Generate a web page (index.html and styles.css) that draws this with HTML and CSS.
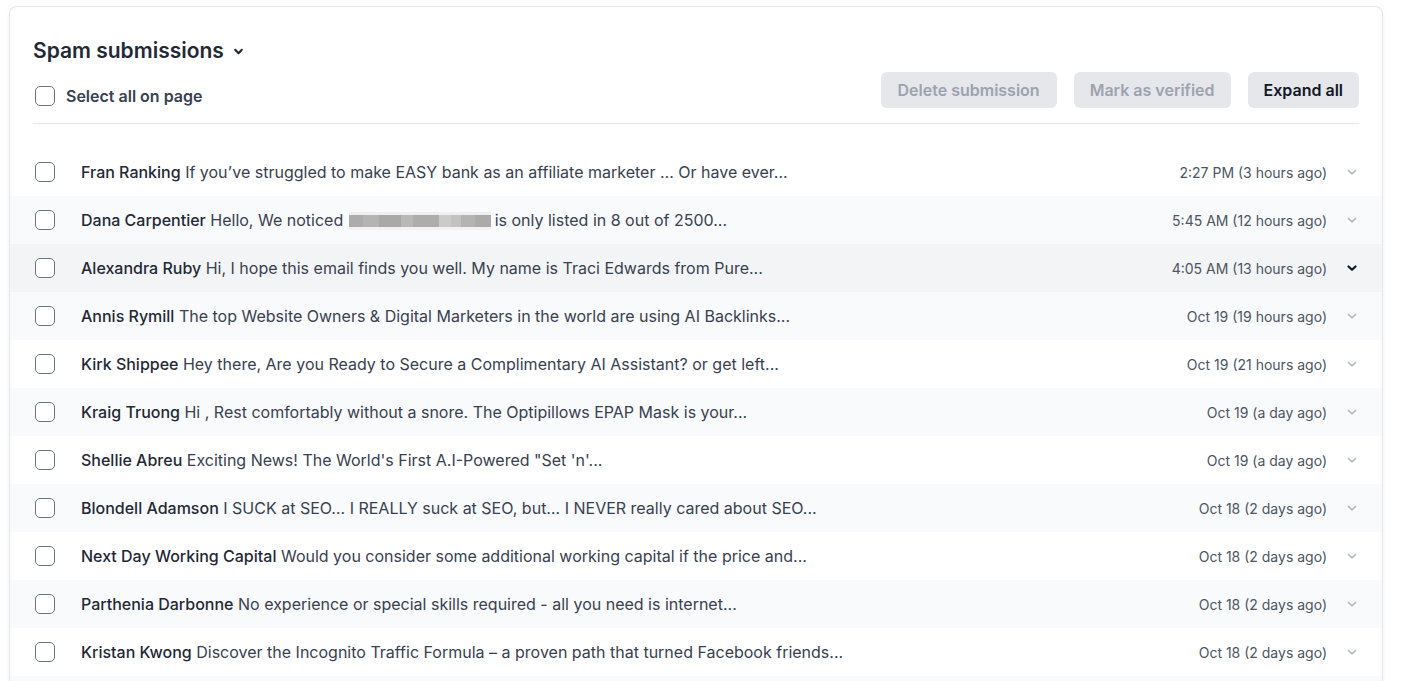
FILE: index.html
```html
<!DOCTYPE html>
<html lang="en">
<head>
<meta charset="utf-8">
<title>Spam submissions</title>
<link rel="stylesheet" href="styles.css">
</head>
<body>
<div class="card">
  <div class="header">
    <div class="header-left">
      <h1 class="title">Spam submissions
        <svg class="title-chev" width="10" height="10" viewBox="0 0 10 10"><path d="M2 3.5 L5 6.5 L8 3.5" fill="none" stroke="#1f2937" stroke-width="1.9" stroke-linecap="round" stroke-linejoin="round"/></svg>
      </h1>
      <label class="select-all"><span class="checkbox"></span><span>Select all on page</span></label>
    </div>
    <div class="actions">
      <button class="btn btn-disabled">Delete submission</button>
      <button class="btn btn-disabled">Mark as verified</button>
      <button class="btn">Expand all</button>
    </div>
  </div>

  <ul class="list">
    <li class="row"><span class="checkbox"></span><span class="msg"><b>Fran Ranking</b> If you’ve struggled to make EASY bank as an affiliate marketer … Or have ever...</span><span class="date">2:27 PM (3 hours ago)</span><svg class="chev" viewBox="0 0 10 10"><path d="M1.5 3.5 L5 6.8 L8.5 3.5"/></svg></li>
    <li class="row"><span class="checkbox"></span><span class="msg"><b>Dana Carpentier</b> Hello, We noticed <span class="blur"></span>is only listed in 8 out of 2500...</span><span class="date">5:45 AM (12 hours ago)</span><svg class="chev" viewBox="0 0 10 10"><path d="M1.5 3.5 L5 6.8 L8.5 3.5"/></svg></li>
    <li class="row row-hover"><span class="checkbox"></span><span class="msg"><b>Alexandra Ruby</b> Hi, I hope this email finds you well. My name is Traci Edwards from Pure...</span><span class="date">4:05 AM (13 hours ago)</span><svg class="chev" viewBox="0 0 10 10"><path d="M1.5 3.5 L5 6.8 L8.5 3.5"/></svg></li>
    <li class="row"><span class="checkbox"></span><span class="msg"><b>Annis Rymill</b> The top Website Owners &amp; Digital Marketers in the world are using AI Backlinks...</span><span class="date">Oct 19 (19 hours ago)</span><svg class="chev" viewBox="0 0 10 10"><path d="M1.5 3.5 L5 6.8 L8.5 3.5"/></svg></li>
    <li class="row"><span class="checkbox"></span><span class="msg"><b>Kirk Shippee</b> Hey there, Are you Ready to Secure a Complimentary AI Assistant? or get left...</span><span class="date">Oct 19 (21 hours ago)</span><svg class="chev" viewBox="0 0 10 10"><path d="M1.5 3.5 L5 6.8 L8.5 3.5"/></svg></li>
    <li class="row"><span class="checkbox"></span><span class="msg"><b>Kraig Truong</b> Hi , Rest comfortably without a snore. The Optipillows EPAP Mask is your...</span><span class="date">Oct 19 (a day ago)</span><svg class="chev" viewBox="0 0 10 10"><path d="M1.5 3.5 L5 6.8 L8.5 3.5"/></svg></li>
    <li class="row"><span class="checkbox"></span><span class="msg"><b>Shellie Abreu</b> Exciting News! The World's First A.I-Powered "Set 'n'...</span><span class="date">Oct 19 (a day ago)</span><svg class="chev" viewBox="0 0 10 10"><path d="M1.5 3.5 L5 6.8 L8.5 3.5"/></svg></li>
    <li class="row"><span class="checkbox"></span><span class="msg"><b>Blondell Adamson</b> I SUCK at SEO… I REALLY suck at SEO, but… I NEVER really cared about SEO...</span><span class="date">Oct 18 (2 days ago)</span><svg class="chev" viewBox="0 0 10 10"><path d="M1.5 3.5 L5 6.8 L8.5 3.5"/></svg></li>
    <li class="row"><span class="checkbox"></span><span class="msg"><b>Next Day Working Capital</b> Would you consider some additional working capital if the price and...</span><span class="date">Oct 18 (2 days ago)</span><svg class="chev" viewBox="0 0 10 10"><path d="M1.5 3.5 L5 6.8 L8.5 3.5"/></svg></li>
    <li class="row"><span class="checkbox"></span><span class="msg"><b>Parthenia Darbonne</b> No experience or special skills required - all you need is internet...</span><span class="date">Oct 18 (2 days ago)</span><svg class="chev" viewBox="0 0 10 10"><path d="M1.5 3.5 L5 6.8 L8.5 3.5"/></svg></li>
    <li class="row"><span class="checkbox"></span><span class="msg"><b>Kristan Kwong</b> Discover the Incognito Traffic Formula – a proven path that turned Facebook friends...</span><span class="date">Oct 18 (2 days ago)</span><svg class="chev" viewBox="0 0 10 10"><path d="M1.5 3.5 L5 6.8 L8.5 3.5"/></svg></li>
    <li class="row row-empty"></li>
  </ul>
</div>
</body>
</html>
```

FILE: styles.css
```css
* { box-sizing: border-box; }
html, body { margin: 0; padding: 0; background: #ffffff; overflow: hidden; }
body {
  font-family: Inter, "Noto Sans", "Liberation Sans", sans-serif;
  color: #374151;
  height: 681px;
}
.card {
  margin: 6px 24px 0 9px;
  border: 1px solid #e5e7eb;
  border-radius: 8px;
  background: #fff;
  box-shadow: 0 1px 4px rgba(0,0,0,0.05);
  overflow: hidden;
}
.header {
  margin: 0 23px 0 23px;
  padding: 29px 0 15px 0;
  border-bottom: 1px solid #e5e7eb;
  display: flex;
  justify-content: space-between;
  align-items: flex-end;
}
.header-left { display: flex; flex-direction: column; gap: 19px; }
.title {
  margin: 0;
  font-size: 21px;
  line-height: 29px;
  font-weight: 600;
  color: #1f2937;
  display: flex;
  align-items: center;
  gap: 9px;
}
.title-chev { width: 11px; height: 11px; margin-top: 2px; }
.select-all {
  display: flex;
  align-items: center;
  gap: 11px;
  font-size: 16px;
  line-height: 24px;
  font-weight: 600;
  color: #374151;
  padding-left: 2px;
}
.checkbox {
  flex: none;
  width: 20px;
  height: 20px;
  border: 1px solid #6b7280;
  border-radius: 5px;
  background: #fff;
}
.actions { display: flex; gap: 17px; }
.btn {
  font-family: inherit;
  height: 36px;
  border: none;
  border-radius: 6px;
  background: #e5e7eb;
  color: #111827;
  font-size: 16px;
  font-weight: 600;
  padding: 0 16px;
}
.btn-disabled { color: #9ca3af; }
.btn-disabled:first-child { padding: 0 17px; }
.list { list-style: none; margin: 24px 0 0 0; padding: 0; }
.row {
  height: 48px;
  display: flex;
  align-items: center;
  padding: 0 25px 0 25px;
  font-size: 16px;
}
.row:nth-child(even) { background: #f9fafb; }
.row.row-hover { background: #f3f4f6; }
.row .checkbox { margin-right: 26px; }
.msg { flex: 1; white-space: nowrap; overflow: hidden; color: #374151; }
.msg b { font-weight: 500; color: #1f2937; }
.blur {
  display: inline-block;
  width: 142px;
  height: 12px;
  margin: 0 4px 0 1px;
  vertical-align: -1px;
  background:
    linear-gradient(90deg,
      #acacac 0 14px, #b4b4b4 14px 30px, #a9a9a9 30px 52px, #b8b8b8 52px 64px,
      #adadad 64px 90px, #cbcbcb 90px 102px, #c2c2c2 102px 112px, #b4b4b4 112px 126px, #ababab 126px 142px);
  box-shadow: 0 -3px 0 #efefef, 0 3px 0 #f2f2f2;
}
.date { font-size: 14px; color: #4b5563; margin-left: 16px; }
.chev {
  width: 10px; height: 10px;
  margin-left: 20px;
  fill: none;
  stroke: #b5b9bf;
  stroke-width: 1.7;
  stroke-linecap: round;
  stroke-linejoin: round;
}
.row-hover .chev { stroke: #111827; stroke-width: 2.2; }
```
